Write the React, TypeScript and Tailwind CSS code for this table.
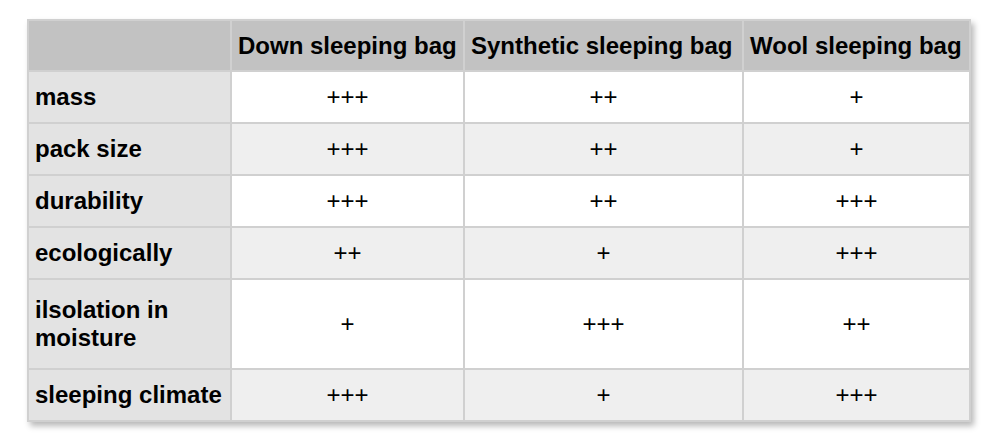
const rows: { label: string; values: string[]; tall?: boolean }[] = [
  { label: "mass", values: ["+++", "++", "+"] },
  { label: "pack size", values: ["+++", "++", "+"] },
  { label: "durability", values: ["+++", "++", "+++"] },
  { label: "ecologically", values: ["++", "+", "+++"] },
  { label: "ilsolation in moisture", values: ["+", "+++", "++"], tall: true },
  { label: "sleeping climate", values: ["+++", "+", "+++"] },
];

const heads = ["Down sleeping bag", "Synthetic sleeping bag", "Wool sleeping bag"];

export default function App() {
  return (
    <div className="w-[1000px] h-[443px] bg-white pt-[19px] pl-[27px] font-['Liberation_Sans',Arial,sans-serif] text-black">
      <table className="table-fixed border-collapse w-[942px] shadow-[3px_4px_6px_rgba(0,0,0,0.28)]">
        <colgroup>
          <col className="w-[203px]" />
          <col className="w-[233px]" />
          <col className="w-[279px]" />
          <col className="w-[227px]" />
        </colgroup>
        <thead>
          <tr className="h-[51px] bg-[#c2c2c2]">
            <th className="border-2 border-[#d0d0d0]" />
            {heads.map((h) => (
              <th
                key={h}
                className="border-2 border-[#d0d0d0] px-[6px] text-left text-[24px] font-bold whitespace-nowrap"
              >
                {h}
              </th>
            ))}
          </tr>
        </thead>
        <tbody>
          {rows.map((r, i) => (
            <tr
              key={r.label}
              className={`${r.tall ? "h-[90px]" : "h-[52px]"} ${i % 2 === 0 ? "bg-white" : "bg-[#efefef]"}`}
            >
              <td className="border-2 border-[#d0d0d0] bg-[#e3e3e3] px-[6px] text-[24px] font-bold leading-[28px]">
                {r.label === "ilsolation in moisture" ? (
                  <>
                    ilsolation in
                    <br />
                    moisture
                  </>
                ) : (
                  r.label
                )}
              </td>
              {r.values.map((v, j) => (
                <td
                  key={j}
                  className="border-2 border-[#d0d0d0] text-center text-[24px] leading-[28px]"
                >
                  {v}
                </td>
              ))}
            </tr>
          ))}
        </tbody>
      </table>
    </div>
  );
}
